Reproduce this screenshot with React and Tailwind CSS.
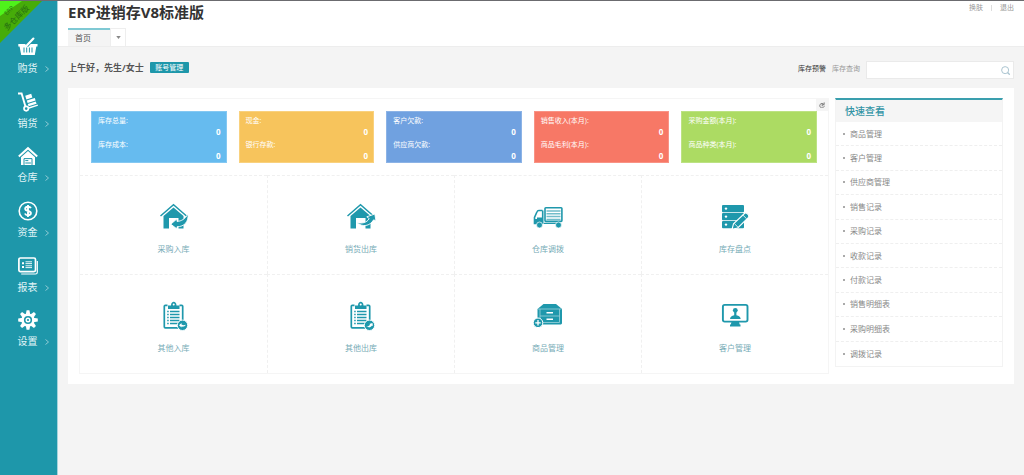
import React from 'react';

const Svg = ({ className, children, box = '0 0 30 30' }) => (
  <svg viewBox={box} className={className} fill="none" stroke="none" aria-hidden="true">{children}</svg>
);

const BasketIcon = () => (
  <Svg className="h-5 w-5" box="0 0 20 20">
    <path d="M0.3 7h19.2v2.4h-1.2L16.8 18H3.2L1.6 9.4H0.3z" fill="#fff" />
    <path d="M6 10.5v5M8.7 10.5v5M11.4 10.5v5M14 10.5v5" stroke="#1e97aa" strokeWidth="1" />
    <path d="M8.5 8.5l6.6-6.8" stroke="#1e97aa" strokeWidth="4" />
    <path d="M9 8.200l6.400-6.600" stroke="#fff" strokeWidth="2.200" strokeLinecap="round" />
  </Svg>
);
const TrolleyIcon = () => (
  <Svg className="h-5 w-5" box="0 0 20 20">
    <path d="M0 1.500h3.600l4 13.600" stroke="#fff" strokeWidth="1.900" />
    <path d="M10 16.200l9.800-3.100" stroke="#fff" strokeWidth="1.500" />
    <circle cx="8.200" cy="16.600" r="2.200" stroke="#fff" strokeWidth="1.700" />
    <path d="M7.200 3.800l6-2 1.200 3.800-6 2zM8.800 8.600l8-2.600.8 2.400-8 2.600zM9.800 12l8-2.600.8 2.300-8 2.600z" fill="#fff" />
  </Svg>
);
const WarehouseIcon = () => (
  <Svg className="h-5 w-5" box="0 0 20 20">
    <path d="M0.800 10.600L10 2.200l9.200 8.400" stroke="#fff" strokeWidth="2" />
    <path d="M3 11.300l7-6.200 7 6.200V19H3z" fill="#fff" />
    <path d="M6 18.900v-6.300h8v6.300" stroke="#1e97aa" />
    <path d="M7.300 14.600h3M7.300 17h5.600" stroke="#1e97aa" />
  </Svg>
);
const MoneyIcon = () => (
  <Svg className="h-5 w-5" box="0 0 20 20">
    <circle cx="10" cy="10" r="8.800" stroke="#fff" strokeWidth="1.600" />
    <path d="M12.900 7.200C12.300 6 11.300 5.700 10 5.700c-1.700 0-2.800.8-2.800 2.100 0 3 5.700 1.300 5.700 4.300 0 1.400-1.200 2.200-2.900 2.200-1.500 0-2.600-.6-3.100-1.800M10 4v12" stroke="#fff" strokeWidth="1.900" />
  </Svg>
);
const ReportIcon = () => (
  <Svg className="h-5 w-5" box="0 0 20 20">
    <path d="M3.200 18h14.300c1.300 0 1.800-.6 1.800-1.800V5" stroke="#fff" strokeWidth="1.200" />
    <rect x="0.900" y="2" width="16.600" height="13.600" rx="1.500" stroke="#fff" strokeWidth="1.700" />
    <path d="M4 6.200h2v2H4zM4 10h2v2H4z" fill="#fff" />
    <path d="M7.500 5.800h6.500M7.500 7.600h6.500M7.500 9.800h6.500M7.500 11.600h6.500" stroke="#fff" strokeWidth=".9" />
  </Svg>
);
const GearIcon = () => (
  <Svg className="h-5 w-5" box="0 0 20 20">
    {[0, 45, 90, 135].map((a) => (
      <path key={a} d="M8.600 0.200h2.800l.9 4.500v10.600l-.9 4.500H8.600l-.9-4.500V4.700z" fill="#fff" transform={`rotate(${a} 10 10)`} />
    ))}
    <circle cx="10" cy="10" r="6.600" fill="#fff" />
    <circle cx="10" cy="10" r="4.100" fill="#1e97aa" />
    <circle cx="10" cy="10" r="2.500" fill="#fff" />
    <circle cx="10" cy="10" r="1.100" fill="#1e97aa" />
  </Svg>
);

const T = '#1f98ac';
const HouseBase = () => (
  <>
    <path d="M1.500 14L14.500 2.800 27.500 14" stroke={T} strokeWidth="1.500" />
    <path d="M4.500 14L14.500 5.400 24.500 14v12.500h-5V16h-9.500v10.500H4.500z" fill={T} />
  </>
);
const HouseInIcon = () => (
  <Svg className="h-[30px] w-[30px]">
    <HouseBase />
    <path d="M29 12c.8 7.500-3.500 12.700-11 12.800v2.200L11.800 22.200l6.200-5.400v2.600c4.500-.2 8-2.400 11-7.400z" fill={T} stroke="#fff" strokeWidth=".9" />
  </Svg>
);
const HouseOutIcon = () => (
  <Svg className="h-[30px] w-[30px]">
    <HouseBase />
    <path d="M10.500 20.500c5.500 1.300 10.300.3 12.700-3.900l-2.400-1.800 8-2.800 1.200 7-2.300-1.200c-4 6.600-11.200 7.600-17.200 2.700z" fill={T} stroke="#fff" strokeWidth=".9" />
  </Svg>
);
const TruckIcon = () => (
  <Svg className="h-[30px] w-[30px]">
    <rect x="12" y="5.800" width="16.900" height="13.600" rx=".8" stroke={T} strokeWidth="1.600" />
    <path d="M13.500 9h14M13.500 11.800h14M13.500 14.600h14M13.500 17.400h14" stroke="#72bdca" strokeWidth="1.500" />
    <path d="M9.500 8.500H5.800c-1 0-1.500.5-1.900 1.500L1.500 15.500v6H4M4 16.300h5.700V8.500" stroke={T} strokeWidth="1.600" />
    <path d="M1 17h9.500v5H1zM11 20.800h12V22H11z" fill={T} />
    <circle cx="6.500" cy="23" r="3" fill={T} stroke="#fff" strokeWidth=".7" />
    <circle cx="25.500" cy="23" r="3" fill={T} stroke="#fff" strokeWidth=".7" />
  </Svg>
);
const StockCheckIcon = () => (
  <Svg className="h-[30px] w-[30px]">
    {[3, 11, 19].map((y) => (
      <g key={y}>
        <rect x="2" y={y} width="22" height="7.300" rx="1" fill={T} />
        <circle cx="6" cy={y + 3.600} r="1.200" fill="#fff" />
      </g>
    ))}
    <path d="M12 27.300l1.500-5.500L24.700 11.300c1.700-1 5 1.700 3.800 4L17.700 26z" fill={T} stroke="#fff" strokeWidth="1.100" />
    <path d="M14.300 21.500l3.700 3.700M22.800 13l3.700 3.700" stroke="#fff" strokeWidth=".8" />
  </Svg>
);
const Clipboard = ({ children }) => (
  <Svg className="h-[30px] w-[30px]">
    <rect x="5.300" y="4.300" width="18.400" height="22.500" rx="1" stroke={T} strokeWidth="1.700" />
    <path d="M8.500 3h12v5h-12z" fill="#fff" />
    <path d="M9 8V4.500h3C12 -.5 17.500 -.5 17.500 4.500h3V8z" fill={T} />
    <circle cx="14.700" cy="3.600" r="1" fill="#fff" />
    {[10.500, 13.500, 16.500, 19.500, 22.500].map((y) => (
      <path key={y} d={`M8.200 ${y}h1.500M11 ${y}h9.500`} stroke={T} strokeWidth="1.300" />
    ))}
    <circle cx="23.500" cy="24.300" r="5.200" fill={T} stroke="#fff" strokeWidth=".9" />
    {children}
  </Svg>
);
const OtherInIcon = () => (
  <Clipboard><path d="M20 24.300l2.500-2.200v1.300c1.500 1 2.800 1 4.300.4-1 1.800-2.600 2.200-4.300 1.800v1z" fill="#fff" /></Clipboard>
);
const OtherOutIcon = () => (
  <Clipboard><path d="M20.300 25.300c1.800.3 3-.2 3.800-1.700l-.9-.6 3.200-1.100.6 3.100-1-.5c-1.300 2-3.300 2.500-5.700.8z" fill="#fff" /></Clipboard>
);
const DrawerIcon = () => (
  <Svg className="h-[30px] w-[30px]">
    <path d="M4.500 8L10.500 3h12.500l6 5v14.500l-1 1H4.500z" fill={T} />
    <path d="M5 8h23.500M7 15h20M7 8v13.500h19.500V8" stroke="#8fccd6" strokeWidth=".9" />
    <path d="M13.500 11.700h6.500M13.500 18.200h6.500" stroke="#fff" strokeWidth="1.500" />
    <circle cx="5" cy="21.800" r="4.800" fill={T} stroke="#fff" strokeWidth="1" />
    <path d="M2.300 21.800h5.400M5 19.100v5.400" stroke="#fff" strokeWidth="1.300" />
  </Svg>
);
const CustomerIcon = () => (
  <Svg className="h-[30px] w-[30px]">
    <rect x="2.900" y="3.900" width="24.600" height="16.700" rx="1.800" stroke={T} strokeWidth="1.900" />
    <path d="M11.500 21h7.500l1 3.500h-9.500zM10 23.500h10.500v2H10z" fill={T} />
    <circle cx="15.300" cy="9.300" r="2.400" fill={T} />
    <path d="M14.200 11h2.200v3.200c2.600.3 4 1.500 4.300 3.800H10c.3-2.300 1.700-3.500 4.200-3.800z" fill={T} />
  </Svg>
);

const nav = [
  ['购货', BasketIcon], ['销货', TrolleyIcon], ['仓库', WarehouseIcon],
  ['资金', MoneyIcon], ['报表', ReportIcon], ['设置', GearIcon],
];
const cards = [
  ['bg-[#66bbef] border-[#84c8f2]', '库存总量:', '库存成本:'],
  ['bg-[#f7c45c] border-[#f9d17e]', '现金:', '银行存款:'],
  ['bg-[#70a1e0] border-[#8cb3e6]', '客户欠款:', '供应商欠款:'],
  ['bg-[#f77866] border-[#f99385]', '销售收入(本月):', '商品毛利(本月):'],
  ['bg-[#acdb63] border-[#bce283]', '采购金额(本月):', '商品种类(本月):'],
];
const tiles = [
  ['采购入库', HouseInIcon], ['销货出库', HouseOutIcon], ['仓库调拨', TruckIcon], ['库存盘点', StockCheckIcon],
  ['其他入库', OtherInIcon], ['其他出库', OtherOutIcon], ['商品管理', DrawerIcon], ['客户管理', CustomerIcon],
];
const links = ['商品管理', '客户管理', '供应商管理', '销售记录', '采购记录', '收款记录', '付款记录', '销售明细表', '采购明细表', '调拨记录'];

const Stat = ({ label }) => (
  <div className="h-6">
    <dt className="text-[7px] leading-3">{label}</dt>
    <dd className="text-right text-[8px] font-bold leading-[10px]">0</dd>
  </div>
);

export default function App() {
  return (
    <div className="flex min-h-screen flex-col border-t border-[#6b6b6f] bg-[#f4f4f4] font-['Open_Sans','Noto_Sans_CJK_SC',sans-serif] text-[#555]">
      <div className="flex flex-1">
        <aside className="relative w-[58px] shrink-0 border-r border-[#a5d3dc] bg-[#1e97aa]">
          <div className="absolute left-0 top-0 h-[42px] w-[42px]">
            <svg viewBox="0 0 42 42" className="absolute inset-0 h-full w-full" aria-hidden="true">
              <path d="M0 0h42L0 42z" fill="#46ac09" />
              <path d="M0 0h22L0 15z" fill="#4ff21b" />
            </svg>
            <p className="absolute left-[-3px] top-1 flex w-8 -rotate-45 flex-col items-center whitespace-nowrap text-[8px] leading-[10px] text-[#256b13]">
              <small className="text-[6px] leading-[9px]">ERP</small>
              <span>多仓库版</span>
            </p>
          </div>
          <nav className="mt-8 grid h-[328px] grid-rows-6">
            {nav.map(([label, Icon]) => (
              <a key={label} href="#" className="relative flex flex-col items-center pr-0.5 pt-1 text-[10px] leading-4 text-[#e2f5f8]">
                <Icon />
                <span className="mt-[3px]">{label}</span>
                <svg viewBox="0 0 6 8" className="absolute right-[7px] top-8 h-2 w-1.5" fill="none" stroke="#8fcbd5" aria-hidden="true"><path d="M1.500 1.500L4.500 4 1.500 6.500" /></svg>
              </a>
            ))}
          </nav>
        </aside>

        <div className="min-w-0 flex-1">
          <header className="flex h-[46px] flex-col justify-between border-b border-[#ededed] bg-white px-2.5">
            <div className="flex items-start justify-between">
              <h1 className="text-[15px] font-bold leading-[22px] text-[#333]">ERP进销存V8标准版</h1>
              <div className="flex items-center gap-2 pt-0.5 text-[7px] leading-[10px] text-[#999]">
                <a href="#">换肤</a>
                <span className="h-1.5 w-px bg-[#ddd]" />
                <a href="#">退出</a>
              </div>
            </div>
            <div className="flex h-[18px]">
              <button className="w-[42px] border-t-2 border-[#7fc9d4] bg-[#f4f4f4] pl-[7px] text-left text-[8px] leading-4 text-[#555]">首页</button>
              <button aria-label="标签" className="flex w-4 items-center justify-center border border-b-0 border-[#eee] bg-white">
                <svg viewBox="0 0 6 4" className="h-[3px] w-[5px]" aria-hidden="true"><path d="M0 0h6L3 4z" fill="#888" /></svg>
              </button>
            </div>
          </header>

          <main className="px-2.5">
            <div className="flex h-[41px] items-center justify-between">
              <div className="flex items-center gap-1.5">
                <p className="text-[9px] font-bold leading-3 text-[#555]">上午好，先生/女士</p>
                <button className="h-[11px] w-[39px] rounded-[1px] bg-[#1e97aa] text-center text-[7px] leading-[11px] text-white">账号管理</button>
              </div>
              <div className="flex items-center gap-1.5 pt-1 text-[7px]">
                <label htmlFor="stock" className="text-[#333]">库存预警</label>
                <label htmlFor="stock" className="text-[#999]">库存查询</label>
                <div className="relative">
                  <input id="stock" type="text" className="block h-[18px] w-[148px] border border-[#eaeaea] bg-white px-1 text-[8px] outline-none" />
                  <svg viewBox="0 0 10 10" className="absolute right-1 top-[5px] h-[9px] w-[9px]" fill="none" stroke="#a9c3cf" aria-hidden="true">
                    <circle cx="4.600" cy="4.600" r="3.900" strokeWidth="1.100" /><path d="M7.300 7.300l2.400 2.400" strokeWidth="1.400" />
                  </svg>
                </div>
              </div>
            </div>

            <div className="flex items-start gap-1.5 bg-white px-[11px] py-2.5">
              <section className="min-w-0 flex-1 border border-[#f5f5f5]">
                <div className="relative grid grid-cols-5 gap-3 px-[11px] py-3">
                  <button aria-label="刷新" className="absolute right-0 top-0 flex h-3 w-3 items-center justify-center bg-[#f5f5f5]">
                    <svg viewBox="0 0 8 8" className="h-1.5 w-1.5" fill="none" stroke="#777" strokeWidth="1.200" aria-hidden="true"><path d="M6.500 3.200A3 3 0 1 0 7 5M3.500 3.500h3.400V.5M3.500 5h2" /></svg>
                  </button>
                  {cards.map(([tone, a, b]) => (
                    <dl key={a} className={`h-[52px] border pl-[6px] pr-[5px] pt-[3px] text-white ${tone}`}>
                      <Stat label={a} />
                      <Stat label={b} />
                    </dl>
                  ))}
                </div>
                <div className="grid grid-cols-4">
                  {tiles.map(([label, Icon]) => (
                    <a key={label} href="#" className="flex h-[99px] flex-col items-center border-l border-t border-dashed border-[#f0f0f0] pt-[26px] text-[8px] leading-3 text-[#76abb6] [&:nth-child(4n+1)]:border-l-0">
                      <Icon />
                      <span className="mt-[11px]">{label}</span>
                    </a>
                  ))}
                </div>
              </section>

              <section className="w-[168px] shrink-0 border border-t-2 border-[#f3f3f3] border-t-[#3a9fae]">
                <h2 className="h-[22px] bg-[#f5f5f5] pl-[9px] text-[10px] font-medium leading-[22px] text-[#3394a5]">快速查看</h2>
                <ul className="grid h-[244px] grid-rows-10">
                  {links.map((l) => (
                    <li key={l} className="flex items-center gap-[5px] border-b border-dashed border-[#efefef] pl-[7px] text-[8px] leading-3 text-[#888] last:border-b-0">
                      <span className="h-0.5 w-0.5 bg-[#aaa]" />
                      <a href="#">{l}</a>
                    </li>
                  ))}
                </ul>
              </section>
            </div>
          </main>
        </div>
      </div>
    </div>
  );
}
